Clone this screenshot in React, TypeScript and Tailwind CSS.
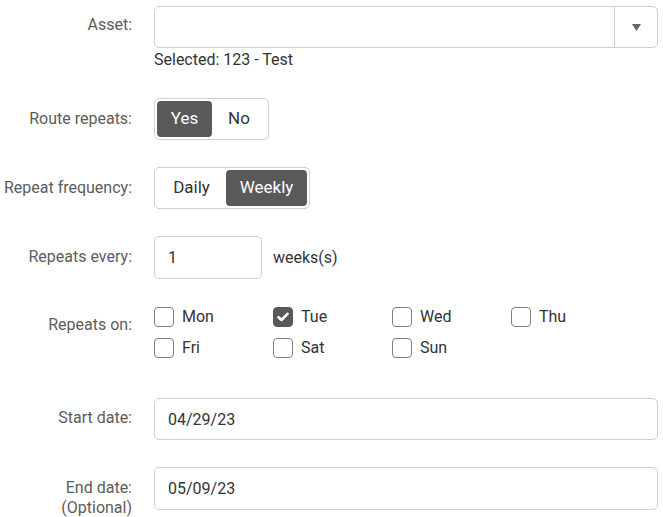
import { useState } from "react";
import type { ReactNode } from "react";

const DAYS = [
  ["Mon", "Tue", "Wed", "Thu"],
  ["Fri", "Sat", "Sun"],
];

function Row({ label, children, labelClass = "", className = "" }: { label: ReactNode; children: ReactNode; labelClass?: string; className?: string }) {
  return (
    <div className={"flex " + className}>
      <div className={"w-[132px] shrink-0 text-right text-[16px] leading-[20px] text-[#5c5c5c] " + labelClass}>{label}</div>
      <div className="ml-[22px] min-w-0 flex-1">{children}</div>
    </div>
  );
}

function Toggle({ options, value, onChange }: { options: { label: string; w: string }[]; value: string; onChange: (v: string) => void }) {
  return (
    <div className="inline-flex rounded-[5px] border border-[#cfcfcf] bg-white p-[2px]">
      {options.map((o) => (
        <button
          key={o.label}
          type="button"
          onClick={() => onChange(o.label)}
          className={
            "h-[36px] rounded-[4px] text-[17px] " +
            o.w +
            (value === o.label ? " bg-[#595959] text-white" : " text-[#333]")
          }
        >
          {o.label}
        </button>
      ))}
    </div>
  );
}

export default function App() {
  const [repeats, setRepeats] = useState("Yes");
  const [freq, setFreq] = useState("Weekly");
  const [days, setDays] = useState<string[]>(["Tue"]);

  function toggleDay(d: string) {
    setDays((cur) => (cur.includes(d) ? cur.filter((x) => x !== d) : [...cur, d]));
  }

  return (
    <div className="w-[663px] bg-white pr-[5px] font-['Roboto',sans-serif]">
      {/* Asset picker */}
      <Row label="Asset:" className="pt-[6px]" labelClass="pt-[9px]">
        <div className="flex h-[42px] rounded-[5px] border border-[#cfcfcf]">
          <div className="flex-1" />
          <div className="flex w-[43px] items-center justify-center border-l border-[#cfcfcf]">
            <svg width="9" height="7" viewBox="0 0 9 7">
              <polygon points="0,0 9,0 4.5,7" fill="#666" />
            </svg>
          </div>
        </div>
        <div className="mt-[2px] text-[16px] leading-[20px] text-[#333]">Selected: 123 - Test</div>
      </Row>

      <Row label="Route repeats:" className="mt-[28px]" labelClass="pt-[11px]">
        <Toggle
          options={[
            { label: "Yes", w: "w-[55px]" },
            { label: "No", w: "w-[54px]" },
          ]}
          value={repeats}
          onChange={setRepeats}
        />
      </Row>

      <Row label="Repeat frequency:" className="mt-[27px]" labelClass="pt-[11px]">
        <Toggle
          options={[
            { label: "Daily", w: "w-[69px]" },
            { label: "Weekly", w: "w-[81px]" },
          ]}
          value={freq}
          onChange={setFreq}
        />
      </Row>

      <Row label="Repeats every:" className="mt-[27px]" labelClass="pt-[11px]">
        <div className="flex items-center">
          <input
            defaultValue="1"
            className="h-[43px] w-[108px] rounded-[5px] border border-[#cfcfcf] px-[13px] text-[16px] text-[#333] outline-none"
          />
          <span className="ml-[11px] text-[16px] text-[#333]">weeks(s)</span>
        </div>
      </Row>

      <Row label="Repeats on:" className="mt-[28px]" labelClass="pt-[8px]">
        <div className="flex flex-col gap-[11px]">
          {DAYS.map((row, i) => (
            <div key={i} className="flex">
              {row.map((d) => {
                const on = days.includes(d);
                return (
                  <label key={d} className="flex w-[119px] cursor-pointer items-center">
                    <span
                      onClick={() => toggleDay(d)}
                      className={
                        "flex h-[20px] w-[20px] items-center justify-center rounded-[4px] border " +
                        (on ? "border-[#595959] bg-[#595959]" : "border-[#808080] bg-white")
                      }
                    >
                      {on && (
                        <svg width="12" height="10" viewBox="0 0 12 10">
                          <path d="M1.5 5.2 L4.5 8 L10.5 1.8" fill="none" stroke="#fff" strokeWidth="2.6" strokeLinecap="round" strokeLinejoin="round" />
                        </svg>
                      )}
                    </span>
                    <span className="ml-[8px] text-[16px] leading-[20px] text-[#333]">{d}</span>
                  </label>
                );
              })}
            </div>
          ))}
        </div>
      </Row>

      <Row label="Start date:" className="mt-[40px]" labelClass="pt-[10px]">
        <input
          defaultValue="04/29/23"
          className="h-[42px] w-full rounded-[5px] border border-[#cfcfcf] px-[13px] text-[16px] text-[#333] outline-none"
        />
      </Row>

      <Row
        label={
          <>
            End date:
            <br />
            (Optional)
          </>
        }
        className="mt-[27px]"
        labelClass="pt-[11px]"
      >
        <input
          defaultValue="05/09/23"
          className="h-[43px] w-full rounded-[5px] border border-[#cfcfcf] px-[13px] text-[16px] text-[#333] outline-none"
        />
      </Row>
    </div>
  );
}
